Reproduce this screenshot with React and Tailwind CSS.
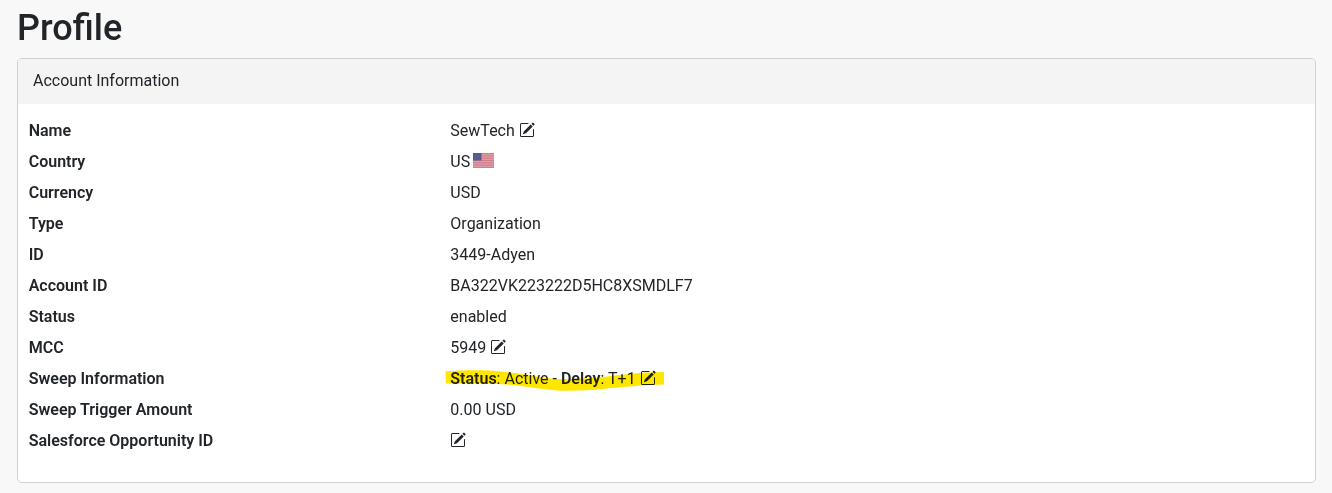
import React from "react";
import { BsPencilSquare } from "react-icons/bs";

function Edit() {
  return <BsPencilSquare aria-label="Edit" className="mb-[2px] inline-block size-4 shrink-0" />;
}

function Flag() {
  return (
    <svg viewBox="0 0 21 15" className="mb-[2px] ml-[3px] h-[15px] w-[21px] shrink-0">
      <rect width="21" height="15" fill="#dfa0aa" />
      {[0, 1, 2, 3, 4, 5, 6].map((i) => (
        <rect key={i} y={i * 2.3} width="21" height="1.15" fill="#d27d89" />
      ))}
      <rect width="8.5" height="7.5" fill="#565a91" />
    </svg>
  );
}

function Highlight() {
  return (
    <svg viewBox="0 0 220 26" className="absolute -left-[5px] top-0 h-[26px] w-[220px] mix-blend-multiply">
      <path
        d="M0.5 4.500 C15 3 42 2.500 56 4.500 C72 6 88 9 105 11.500 C122 13 140 11.500 155 10.500 C174 8 195 5 219 5 V17.500 C200 18 175 20 158 22 C145 23.500 125 24 112 23.500 C96 22.500 80 19 62 17.500 C42 16 18 16.500 1 16.500 Z"
        fill="#ffe600"
      />
    </svg>
  );
}

function Row({ label, children }) {
  return (
    <div className="flex h-[31px] items-center">
      <dt className="w-[421.66px] shrink-0 font-semibold">{label}</dt>
      <dd className="relative flex h-6 items-center whitespace-pre">{children}</dd>
    </div>
  );
}

export default function App() {
  return (
    <main className="h-[493px] bg-[#f8f8f8] px-[17px] pt-[7px] font-['Roboto',sans-serif] text-base leading-6 text-[#212529]">
      <h1 className="h-[51px] text-[36px] font-medium leading-[43px]">Profile</h1>
      <section className="mr-[-1px] h-[425px] overflow-hidden rounded-[5px] border border-[#d0d0d0] bg-white">
        <header className="h-[45px] bg-[#f4f4f4] px-[15px] pt-[10px]">Account Information</header>
        <dl className="pl-[10.7px] pt-[11px]">
          <Row label="Name">SewTech <Edit /></Row>
          <Row label="Country">US<Flag /></Row>
          <Row label="Currency">USD</Row>
          <Row label="Type">Organization</Row>
          <Row label="ID">3449-Adyen</Row>
          <Row label="Account ID">BA322VK223222D5HC8XSMDLF7</Row>
          <Row label="Status">enabled</Row>
          <Row label="MCC">5949 <Edit /></Row>
          <Row label="Sweep Information">
            <span><b className="font-semibold">Status</b>: Active - <b className="font-semibold">Delay</b>: T+1 </span>
            <Edit />
            <Highlight />
          </Row>
          <Row label="Sweep Trigger Amount">0.00 USD</Row>
          <Row label="Salesforce Opportunity ID"><Edit /></Row>
        </dl>
      </section>
    </main>
  );
}
